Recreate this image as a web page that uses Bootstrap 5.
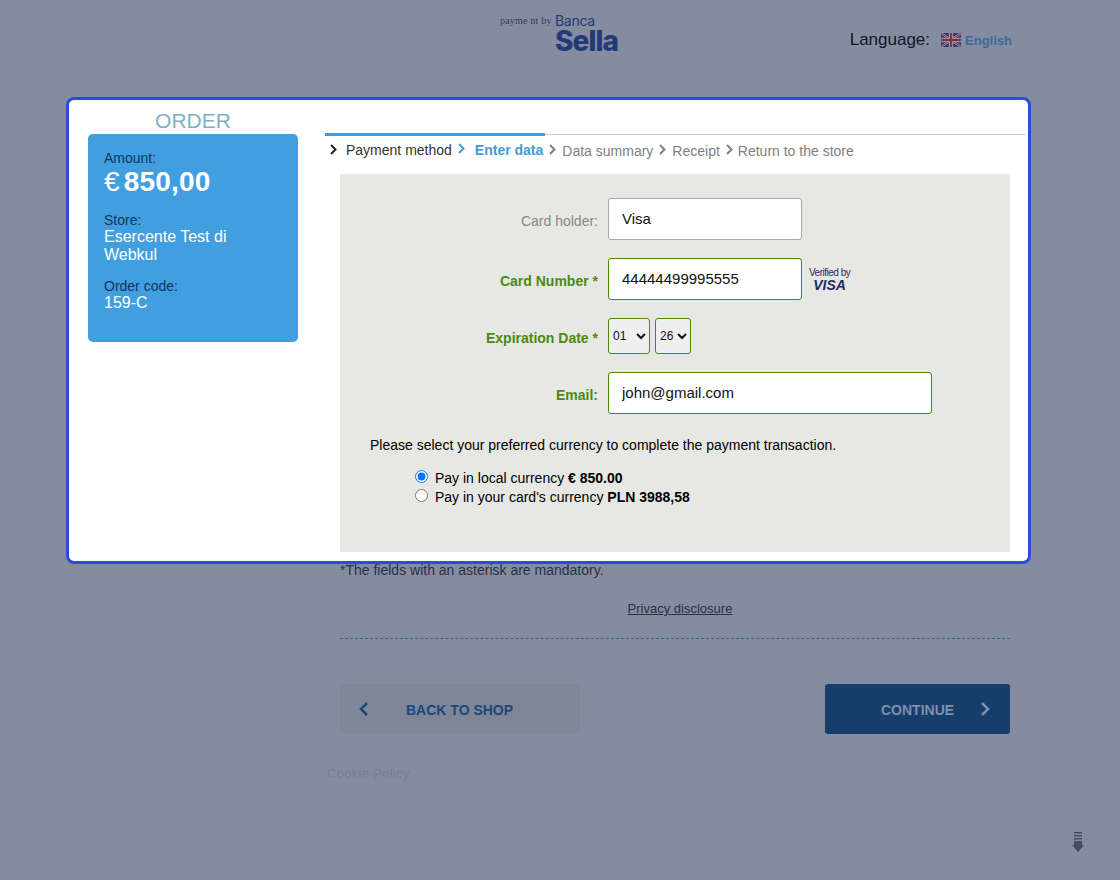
<!DOCTYPE html>
<html lang="en">
<head>
    <meta charset="UTF-8">
    <meta name="viewport" content="width=device-width, initial-scale=1.0">
    <title>Payment - Banca Sella</title>
    <link rel="stylesheet" href="https://cdn.jsdelivr.net/npm/bootstrap@5.3.0/dist/css/bootstrap.min.css">
    <style>
        body { background: #858c9f; font-family: "Liberation Sans", Arial, sans-serif; color: #1d2433; height: 880px; overflow: hidden; position: relative; }
        .top-bar { height: 97px; padding-left: 500px; padding-right: 108px; }
        .pay-by { font-family: "Liberation Serif", serif; font-size: 10px; letter-spacing: .2px; color: #2f3a70; margin-top: 13px; width: 55px; white-space: nowrap; }
        .brand-box { color: #233a78; margin-top: 13px; }
        .brand-small { font-family: "Inter", sans-serif; font-size: 14px; line-height: 16px; letter-spacing: -.3px; }
        .brand-big { font-family: "Inter", sans-serif; font-size: 28px; font-weight: 800; line-height: 24px; letter-spacing: -.9px; }
        .lang-box { margin-top: 29px; height: 22px; }
        .lang-label { font-size: 17px; color: #10182b; margin-right: 11px; }
        .lang-link { font-size: 13px; font-weight: 700; color: #3d6a9f; margin: 2px 0 0 4px; }
        .focus-frame { width: 965px; height: 467px; margin-left: 66px; background: #fff; border: 3px solid #2a4bdc; border-radius: 8px; padding-left: 19px; }
        .side-col { width: 210px; flex: none; }
        .side-title { font-size: 21px; line-height: 24px; text-align: center; color: #7fb0c6; margin-top: 9px; height: 25px; }
        .amount-box { height: 208px; background: #419fe0; border-radius: 5px; padding: 16px; color: #fff; font-size: 16px; line-height: 18px; }
        .amount-box .cap { font-size: 14px; line-height: 16px; color: #0f3560; }
        .amount-val { font-size: 28px; line-height: 31px; font-weight: 700; margin: 0 0 15px; letter-spacing: .2px; }
        .amount-val span { font-weight: 400; margin-right: 4px; }
        .store-name { margin-bottom: 14px; }
        .main-col { width: 700px; margin-left: 27px; padding-top: 34px; }
        .step-row { border-top: 1px solid #c9c9c9; height: 40px; position: relative; font-size: 14px; line-height: 16px; padding-left: 4px; padding-top: 8px; color: #808080; white-space: nowrap; }
        .step-row::before { content: ""; position: absolute; left: 0; top: -2px; width: 220px; height: 3px; background: #419cd8; }
        .step-done { color: #333; margin-top: -1px; }
        .step-now { color: #419cd8; font-weight: 700; margin-top: -1px; }
        .step-row svg { flex: none; margin: 1px 6px 0 5px; }
        .step-row svg.first-chev { margin: 1px 9px 0 0; }
        .step-row svg.after-done { margin: 0 10px 0 5px; }
        .step-row svg.lead-in { margin: 1px 5px 0 5px; }
        .form-panel { width: 670px; height: 378px; margin-left: 15px; background: #e7e8e3; padding: 24px 0 0; font-size: 14px; color: #000; }
        .field-row { height: 42px; margin-bottom: 18px; }
        .field-label { width: 258px; text-align: right; margin-right: 10px; color: #888; font-size: 14px; padding-top: 4px; }
        .field-label.need { color: #4a8a0f; font-weight: 700; }
        .pay-input { width: 194px; height: 42px; font-size: 15px; padding: 0 13px 2px; border: 1px solid #a9a9a9; border-radius: 3px; color: #111; box-shadow: none; }
        .pay-input.ok { border-color: #4a8a0f; }
        .pay-input.wide { width: 324px; }
        .date-row { height: 36px; margin-bottom: 18px; }
        .date-row select { height: 36px; width: 36px; border: 1px solid #4a8a0f; border-radius: 3px; background-color: #efefef; font-size: 12px; color: #111; margin-right: 5px; }
        .date-row select.month-pick { width: 42px; }
        .vbv { margin: 0 0 0 7px; color: #1f2a63; line-height: 1; text-align: center; width: 41px; }
        .vbv-top { font-size: 10px; letter-spacing: -.5px; margin-top: 2px; white-space: nowrap; }
        .vbv-logo { font-size: 14px; font-weight: 700; font-style: italic; }
        .currency-note { margin: 22px 0 0 30px; line-height: 18px; }
        .currency-list { margin: 15px 0 0 75px; line-height: 19px; }
        .currency-list input { margin: 0 7px 5px 0; width: 13px; height: 13px; }
        .below-col { margin-left: 340px; width: 670px; }
        .req-note { font-size: 14px; line-height: 16px; margin-top: -2px; color: #2a3045; }
        .privacy-link { font-size: 13px; line-height: 16px; color: #2a3045; text-align: center; margin-top: 23px; padding-left: 10px; text-decoration: underline; }
        .dash-line { border-top: 1px dashed #2f6496; margin-top: 21px; }
        .btn-row { margin-top: 45px; }
        .shop-btn { width: 240px; height: 49px; background: #7f8697; color: #1c4679; font-size: 14px; font-weight: 700; border: 0; border-radius: 0; padding: 0 0 0 18px; }
        .shop-btn span { margin-left: 36px; padding-top: 3px; }
        .next-btn { width: 185px; height: 50px; background: #163d6b; color: #7d90ad; font-size: 14px; font-weight: 700; border: 0; border-radius: 3px; padding: 0 19px 0 56px; }
        .next-btn span { padding-top: 2px; }
        .shop-btn:hover { background: #7f8697; color: #1c4679; }
        .next-btn:hover { background: #163d6b; color: #7d90ad; }
        .cookie-link { font-size: 13px; color: #787f92; margin: 32px 0 0 327px; line-height: 16px; letter-spacing: .3px; }
        .scroll-arrow { position: absolute; left: 1072px; top: 832px; }
    </style>
</head>
<body>
    <div class="top-bar d-flex align-items-start">
        <div class="pay-by">payme nt by</div>
        <div class="brand-box">
            <div class="brand-small">Banca</div>
            <div class="brand-big">Sella</div>
        </div>
        <div class="lang-box d-flex align-items-center ms-auto">
            <span class="lang-label">Language:</span>
            <svg width="20" height="14" viewBox="0 0 20 14">
                <rect width="20" height="14" fill="#22386f"/>
                <path d="M0 0 20 14M20 0 0 14" stroke="#8f94a6" stroke-width="2.4"/>
                <path d="M0 0 20 14M20 0 0 14" stroke="#8c2f45" stroke-width="1"/>
                <path d="M10 0V14M0 7H20" stroke="#a4a8b6" stroke-width="4.4"/>
                <path d="M10 0V14M0 7H20" stroke="#8c2f45" stroke-width="2.4"/>
            </svg>
            <span class="lang-link">English</span>
        </div>
    </div>

    <div class="focus-frame d-flex">
        <div class="side-col">
            <div class="side-title">ORDER</div>
            <div class="amount-box">
                <div class="cap">Amount:</div>
                <div class="amount-val"><span>€</span>850,00</div>
                <div class="cap">Store:</div>
                <div class="store-name">Esercente Test di Webkul</div>
                <div class="cap">Order code:</div>
                <div>159-C</div>
            </div>
        </div>
        <div class="main-col">
            <div class="step-row d-flex align-items-start">
                <svg class="first-chev" width="8" height="11" viewBox="0 0 8 11" fill="none" stroke="#222" stroke-width="2"><path d="M2 1 6.5 5.5 2 10"/></svg>
                <span class="step-done">Payment method</span>
                <svg class="after-done" width="8" height="11" viewBox="0 0 8 11" fill="none" stroke="#419cd8" stroke-width="2"><path d="M2 1 6.5 5.5 2 10"/></svg>
                <span class="step-now">Enter data</span>
                <svg width="8" height="11" viewBox="0 0 8 11" fill="none" stroke="#808080" stroke-width="2"><path d="M2 1 6.5 5.5 2 10"/></svg>
                <span>Data summary</span>
                <svg width="8" height="11" viewBox="0 0 8 11" fill="none" stroke="#808080" stroke-width="2"><path d="M2 1 6.5 5.5 2 10"/></svg>
                <span>Receipt</span>
                <svg class="lead-in" width="8" height="11" viewBox="0 0 8 11" fill="none" stroke="#808080" stroke-width="2"><path d="M2 1 6.5 5.5 2 10"/></svg>
                <span>Return to the store</span>
            </div>
            <form class="form-panel">
                <div class="field-row d-flex align-items-center">
                    <label class="field-label" for="holder">Card holder:</label>
                    <input id="holder" type="text" class="form-control pay-input" value="Visa">
                </div>
                <div class="field-row d-flex align-items-center">
                    <label class="field-label need" for="cardNo">Card Number *</label>
                    <input id="cardNo" type="text" class="form-control pay-input ok" value="44444499995555">
                    <div class="vbv">
                        <div class="vbv-top">Verified by</div>
                        <div class="vbv-logo">VISA</div>
                    </div>
                </div>
                <div class="date-row d-flex align-items-center">
                    <label class="field-label need">Expiration Date *</label>
                    <select class="month-pick"><option>01</option></select>
                    <select><option>26</option></select>
                </div>
                <div class="field-row d-flex align-items-center">
                    <label class="field-label need" for="mail">Email:</label>
                    <input id="mail" type="text" class="form-control pay-input ok wide" value="john@gmail.com">
                </div>
                <div class="currency-note">Please select your preferred currency to complete the payment transaction.</div>
                <div class="currency-list">
                    <div class="d-flex align-items-center"><input type="radio" name="cur" checked><span>Pay in local currency <b>€ 850.00</b></span></div>
                    <div class="d-flex align-items-center"><input type="radio" name="cur"><span>Pay in your card's currency <b>PLN 3988,58</b></span></div>
                </div>
            </form>
        </div>
    </div>

    <div class="below-col">
        <div class="req-note">*The fields with an asterisk are mandatory.</div>
        <div class="privacy-link">Privacy disclosure</div>
        <div class="dash-line"></div>
        <div class="btn-row d-flex justify-content-between align-items-start">
            <button type="button" class="btn shop-btn d-flex align-items-center">
                <svg width="12" height="16" viewBox="0 0 12 16" fill="none" stroke="#1c4679" stroke-width="2.5"><path d="M9 2 3 8 9 14"/></svg>
                <span>BACK TO SHOP</span>
            </button>
            <button type="button" class="btn next-btn d-flex align-items-center justify-content-between">
                <span>CONTINUE</span>
                <svg width="12" height="16" viewBox="0 0 12 16" fill="none" stroke="#7d90ad" stroke-width="2.5"><path d="M3 2 9 8 3 14"/></svg>
            </button>
        </div>
    </div>
    <div class="cookie-link">Cookie Policy</div>

    <svg class="scroll-arrow" width="12" height="20" viewBox="0 0 12 20">
        <path d="M2 0H10V1.5H2ZM2 3H10V4.5H2ZM2 6H10V7.5H2ZM2 9H10V13H12L6 20 0 13H2Z" fill="#454c62"/>
    </svg>
</body>
</html>
